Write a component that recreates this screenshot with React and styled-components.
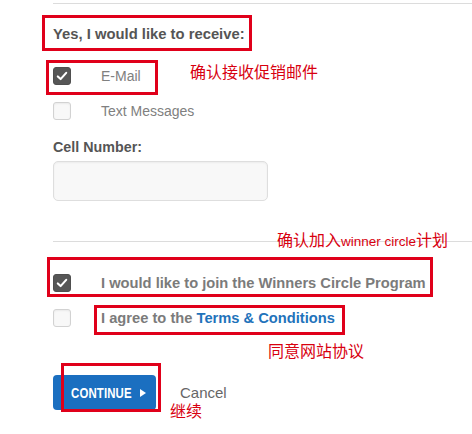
import React from "react";
import styled, { createGlobalStyle } from "styled-components";

const GlobalStyle = createGlobalStyle`
  html, body { margin: 0; padding: 0; background: #fff; }
  body { font-family: "Liberation Sans", Arial, sans-serif; }
`;

const Page = styled.div`
  position: relative;
  width: 472px;
  height: 434px;
  overflow: hidden;
  background: #fff;
`;

const Form = styled.div`
  padding-left: 53px;
  display: flex;
  flex-direction: column;
  align-items: flex-start;
`;

const Divider = styled.div`
  align-self: stretch;
  height: 1px;
  background: #dcdcdc;
  margin-top: ${(p) => p.$top}px;
`;

const Heading = styled.div`
  margin-top: 20px;
  font-size: 14.8px;
  line-height: 20px;
  font-weight: bold;
  color: #555;
`;

const OptionList = styled.div`
  margin-top: ${(p) => p.$top}px;
  display: flex;
  flex-direction: column;
  gap: 17px;
`;

const OptionRow = styled.label`
  display: flex;
  align-items: center;
  height: 18px;
  gap: 30px;
  cursor: pointer;
`;

const Box = styled.span`
  width: 18px;
  height: 18px;
  box-sizing: border-box;
  border-radius: 3px;
  display: flex;
  align-items: center;
  justify-content: center;
  flex: none;
  background: ${(p) => (p.$checked ? "#565656" : "#f8f8f8")};
  border: 1px solid ${(p) => (p.$checked ? "#4f4f4f" : "#d2d2d2")};
  box-shadow: ${(p) =>
    p.$checked ? "none" : "inset 0 1px 2px rgba(0,0,0,0.06)"};
`;

const OptionText = styled.span`
  font-size: ${(p) => (p.$bold ? "14.7px" : "14px")};
  font-weight: ${(p) => (p.$bold ? "bold" : "normal")};
  color: ${(p) => (p.$bold ? "#7b7b7b" : "#808080")};
  white-space: nowrap;
`;

const Link = styled.a`
  color: #1f73bb;
  text-decoration: none;
`;

const FieldLabel = styled.div`
  margin-top: 19px;
  font-size: 14.3px;
  line-height: 17px;
  font-weight: bold;
  color: #555;
`;

const TextInput = styled.input`
  margin-top: 5px;
  width: 215px;
  height: 40px;
  box-sizing: border-box;
  border: 1px solid #dedede;
  border-radius: 5px;
  background: #f8f8f8;
  box-shadow: inset 0 1px 2px rgba(0, 0, 0, 0.05);
  outline: none;
  padding: 0 10px;
  font-family: inherit;
  font-size: 14px;
`;

const Actions = styled.div`
  margin-top: 48px;
  display: flex;
  align-items: center;
  gap: 24px;
`;

const ContinueButton = styled.button`
  width: 103px;
  height: 35px;
  box-sizing: border-box;
  border: none;
  border-radius: 4px;
  background: #1b6fc0;
  color: #fff;
  display: flex;
  align-items: center;
  padding: 0 0 0 18px;
  cursor: pointer;
  font-family: "Liberation Sans", Arial, sans-serif;
`;

const ButtonLabel = styled.span`
  display: inline-block;
  font-size: 15px;
  font-weight: bold;
  width: 78px;
  margin-right: -19px;
  text-align: left;
  transform: scaleX(0.76);
  transform-origin: left center;
  letter-spacing: 0.2px;
`;

const Arrow = styled.span`
  margin-left: 10px;
  width: 0;
  height: 0;
  border-left: 6px solid #fff;
  border-top: 4px solid transparent;
  border-bottom: 4px solid transparent;
`;

const Cancel = styled.a`
  font-size: 15px;
  color: #666;
  text-decoration: none;
  cursor: pointer;
`;

const Marker = styled.div`
  position: absolute;
  left: ${(p) => p.$x}px;
  top: ${(p) => p.$y}px;
  width: ${(p) => p.$w}px;
  height: ${(p) => p.$h}px;
  box-sizing: border-box;
  border: 3px solid #e0001a;
  pointer-events: none;
`;

const Note = styled.div`
  position: absolute;
  left: ${(p) => p.$x}px;
  top: ${(p) => p.$y}px;
  font-family: "Noto Sans CJK SC", "Liberation Sans", sans-serif;
  font-size: 16px;
  line-height: 16px;
  color: #d8000f;
  white-space: nowrap;
  pointer-events: none;
`;

const NoteLatin = styled.span`
  font-family: "Liberation Sans", Arial, sans-serif;
  font-size: 13.5px;
`;

const Check = () => (
  <svg width="12" height="12" viewBox="0 0 12 12" aria-hidden="true">
    <path
      d="M1.8 6.4 L4.6 9.1 L10.2 2.9"
      fill="none"
      stroke="#fff"
      strokeWidth="2.1"
      strokeLinecap="round"
      strokeLinejoin="round"
    />
  </svg>
);

const Option = ({ checked, bold, children }) => (
  <OptionRow>
    <Box $checked={checked}>{checked && <Check />}</Box>
    <OptionText $bold={bold}>{children}</OptionText>
  </OptionRow>
);

export default function App() {
  return (
    <Page>
      <GlobalStyle />
      <Form>
        <Divider $top={3} />
        <Heading>Yes, I would like to receive:</Heading>
        <OptionList $top={23}>
          <Option checked>E-Mail</Option>
          <Option>Text Messages</Option>
        </OptionList>
        <FieldLabel>Cell Number:</FieldLabel>
        <TextInput type="text" />
        <Divider $top={40} />
        <OptionList $top={32}>
          <Option checked bold>
            I would like to join the Winners Circle Program
          </Option>
          <Option bold>
            I agree to the <Link href="#">Terms &amp; Conditions</Link>
          </Option>
        </OptionList>
        <Actions>
          <ContinueButton type="button">
            <ButtonLabel>CONTINUE</ButtonLabel>
            <Arrow />
          </ContinueButton>
          <Cancel>Cancel</Cancel>
        </Actions>
      </Form>

      <Marker $x={42} $y={15} $w={210} $h={36} />
      <Marker $x={46} $y={60} $w={112} $h={35} />
      <Marker $x={47} $y={257} $w={386} $h={40} />
      <Marker $x={94} $y={305} $w={251} $h={30} />
      <Marker $x={61} $y={363} $w={100} $h={49} />

      <Note $x={190} $y={63}>确认接收促销邮件</Note>
      <Note $x={277} $y={231}>
        确认加入<NoteLatin>winner circle</NoteLatin>计划
      </Note>
      <Note $x={268} $y={342}>同意网站协议</Note>
      <Note $x={170} $y={402}>继续</Note>
    </Page>
  );
}
